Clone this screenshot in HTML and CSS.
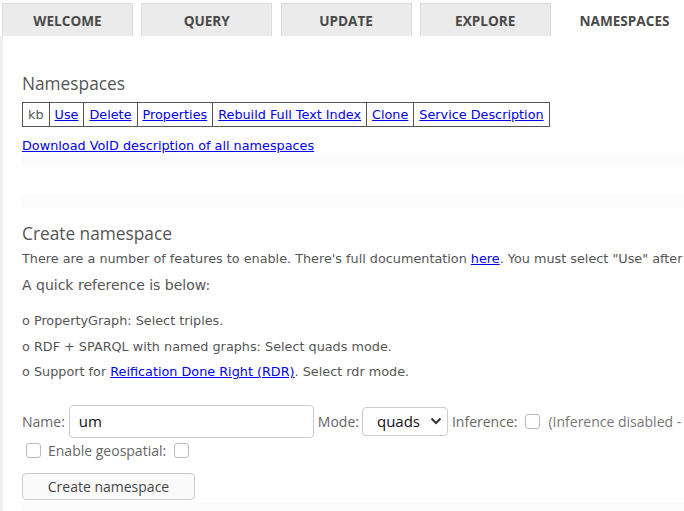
FILE: index.html
```html
<!DOCTYPE html>
<html>
<head>
<meta charset="utf-8">
<link rel="stylesheet" href="styles.css">
</head>
<body>
<nav class="tabs">
  <div class="tab">WELCOME</div>
  <div class="tab">QUERY</div>
  <div class="tab">UPDATE</div>
  <div class="tab">EXPLORE</div>
  <div class="tab active">NAMESPACES</div>
</nav>
<main class="main">
  <section class="ns-list">
    <h2 class="heading">Namespaces</h2>
    <table class="ns-table">
      <tr>
        <td class="ns-name">kb</td>
        <td><a href="#">Use</a></td>
        <td><a href="#">Delete</a></td>
        <td><a href="#">Properties</a></td>
        <td><a href="#">Rebuild Full Text Index</a></td>
        <td><a href="#">Clone</a></td>
        <td><a href="#">Service Description</a></td>
      </tr>
    </table>
    <p class="void"><a href="#">Download VoID description of all namespaces</a></p>
  </section>
  <div class="band band-a"></div>
  <div class="band band-b"></div>
  <section class="create">
    <h2 class="heading heading-create">Create namespace</h2>
    <p class="intro">There are a number of features to enable. There's full documentation <a href="#">here</a>. You must select "Use" after creating a namespace to begin using it.</p>
    <p class="quickref">A quick reference is below:</p>
    <ul class="ref-list">
      <li>o PropertyGraph: Select triples.</li>
      <li>o RDF + SPARQL with named graphs: Select quads mode.</li>
      <li>o Support for <a href="#">Reification Done Right (RDR)</a>. Select rdr mode.</li>
    </ul>
    <div class="form-row">
      <label class="lbl">Name:</label>
      <input class="text-input" type="text" value="um">
      <label class="lbl">Mode:</label>
      <div class="select">
        <span>quads</span>
        <svg width="12" height="8" viewBox="0 0 12 8"><path d="M1.5 1.5 L6 6 L10.5 1.5" fill="none" stroke="#333" stroke-width="2"/></svg>
      </div>
      <label class="lbl">Inference:</label>
      <input class="cb" type="checkbox">
      <span class="lbl note">(Inference disabled - incremental truth maintenance is not supported in quads mode)</span>
    </div>
    <div class="form-row row2">
      <input class="cb" type="checkbox">
      <label class="lbl">Enable geospatial:</label>
      <input class="cb" type="checkbox">
    </div>
    <button class="btn" type="button">Create namespace</button>
    <div class="band band-c"></div>
  </section>
</main>
</body>
</html>
```
FILE: styles.css
```css
html, body {
  margin: 0;
  padding: 0;
  background: #fff;
  overflow: hidden;
}
body {
  width: 684px;
  height: 511px;
  font-family: "DejaVu Sans", sans-serif;
  color: #555;
  white-space: nowrap;
}
.tabs {
  display: flex;
  gap: 8.25px;
  padding: 3px 0 0 2px;
  height: 36px;
  box-sizing: border-box;
}
.tab {
  flex: none;
  width: 131px;
  height: 33px;
  box-sizing: border-box;
  background: #ebebeb;
  border: 1px solid #dcdcdc;
  border-bottom: none;
  display: flex;
  align-items: center;
  justify-content: center;
  font-family: "Open Sans", sans-serif;
  font-weight: 700;
  font-size: 13.6px;
  color: #4a4a4a;
  padding-top: 1px;
}
.tab.active {
  background: #fff;
  border-color: #fff;
}
.main {
  border-left: 3px solid #eeeeee;
  padding-left: 19px;
  height: 475px;
  overflow: hidden;
}
.heading {
  margin: 0;
  font-family: "Open Sans", sans-serif;
  font-weight: 400;
  font-size: 17.3px;
  line-height: 24px;
  color: #555;
}
.ns-list {
  padding-top: 36px;
}
.ns-table {
  margin-top: 6px;
  border-collapse: collapse;
  font-size: 12.8px;
}
.ns-table td {
  border: 1px solid #555;
  padding: 0 5px;
  height: 23px;
}
.ns-name {
  color: #555;
}
a {
  color: #0000ee;
}
.void {
  margin: 11px 0 0;
  font-size: 12.8px;
  line-height: 16px;
}
.band {
  background: #fbfbfb;
  height: 12px;
}
.band-b {
  margin-top: 29px;
  height: 13px;
}
.heading-create {
  margin-top: 14px;
}
.intro {
  margin: 3px 0 0;
  font-size: 12.8px;
  line-height: 20px;
}
.quickref {
  margin: 5px 0 0;
  font-size: 14px;
  line-height: 22px;
}
.ref-list {
  list-style: none;
  margin: 12px 0 0;
  padding: 0;
  font-size: 12.8px;
}
.ref-list li {
  line-height: 25.5px;
}
.form-row {
  display: flex;
  align-items: center;
  margin-top: 20px;
}
.form-row > * {
  flex: none;
}
.lbl {
  font-family: "Open Sans", sans-serif;
  font-size: 14px;
  color: #666;
}
.text-input {
  margin: 0 4px 0 4px;
  width: 245px;
  height: 33px;
  box-sizing: border-box;
  border: 1px solid #ccc;
  border-radius: 4px;
  padding: 0 9px;
  font-family: "Open Sans", sans-serif;
  font-size: 15px;
  font-weight: 500;
  color: #111;
  outline: none;
}
.select {
  margin: 0 4px 0 3px;
  width: 86px;
  height: 29px;
  box-sizing: border-box;
  border: 1px solid #ccc;
  border-radius: 4px;
  display: flex;
  align-items: center;
  gap: 10px;
  padding-left: 14px;
  font-family: "Open Sans", sans-serif;
  font-size: 15px;
  color: #111;
}
.cb {
  appearance: none;
  -webkit-appearance: none;
  margin: 0 8px 0 8px;
  width: 15px;
  height: 15px;
  border: 1px solid #bbb;
  border-radius: 3px;
  background: #fff;
}
.note {
  color: #777;
}
.row2 {
  margin-top: 3px;
  padding-left: 4px;
}
.row2 .cb:first-child {
  margin-left: 0;
  margin-right: 7px;
}
.btn {
  display: block;
  margin-top: 13px;
  width: 173px;
  height: 27px;
  border: 1px solid #ccc;
  border-radius: 4px;
  background: #fafafa;
  font-family: "Open Sans", sans-serif;
  font-size: 14px;
  color: #444;
  padding: 0;
}
.band-c {
  margin-top: 2px;
  height: 12px;
}
```
